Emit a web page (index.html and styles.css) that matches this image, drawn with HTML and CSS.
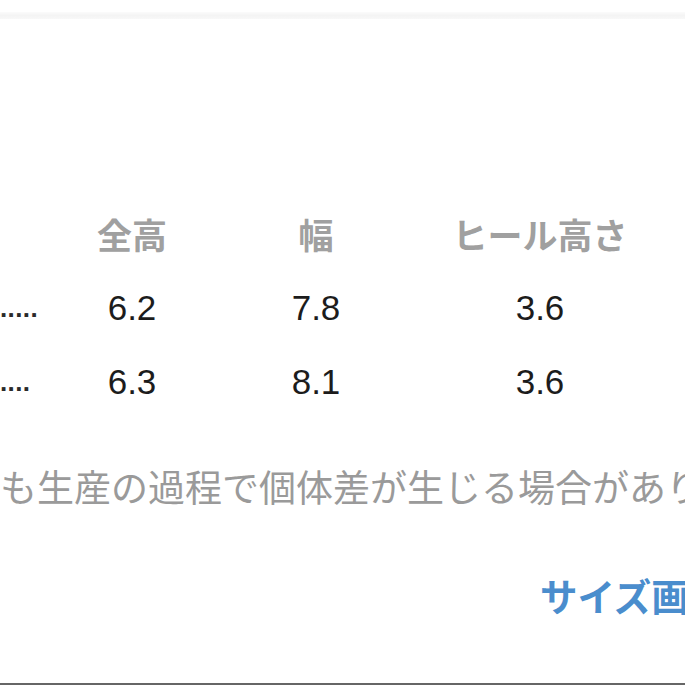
FILE: index.html
```html
<!DOCTYPE html>
<html lang="ja">
<head>
<meta charset="utf-8">
<title>サイズ表</title>
<link rel="stylesheet" href="styles.css">
</head>
<body>
<div class="page">
  <div class="topband"></div>
  <div class="size-table">
    <div class="cell label"></div>
    <div class="cell head">全高</div>
    <div class="cell head">幅</div>
    <div class="cell head">ヒール高さ</div>

    <div class="cell label">.....</div>
    <div class="cell num">6.2</div>
    <div class="cell num">7.8</div>
    <div class="cell num">3.6</div>

    <div class="cell label">....</div>
    <div class="cell num">6.3</div>
    <div class="cell num">8.1</div>
    <div class="cell num">3.6</div>
  </div>
  <p class="note">も生産の過程で個体差が生じる場合があり</p>
  <p class="link-row"><a class="link" href="#">サイズ画</a></p>
</div>
</body>
</html>
```
FILE: styles.css
```css
html, body {
  margin: 0;
  padding: 0;
  background: #ffffff;
}

.page {
  width: 685px;
  height: 685px;
  box-sizing: border-box;
  border-bottom: 2px solid #666666;
  overflow: hidden;
  font-family: "Noto Sans CJK JP", "Noto Sans", sans-serif;
}

.topband {
  margin-top: 12px;
  height: 7px;
  background: linear-gradient(#fbfbfb, #f4f4f4 50%, #f8f8f8);
}

.size-table {
  display: grid;
  grid-template-columns: 60px 144px 224px 224px;
  grid-auto-rows: 74px;
  margin-top: 178px;
}

.cell {
  display: flex;
  align-items: center;
  justify-content: center;
  white-space: nowrap;
}

.head {
  font-size: 35px;
  font-weight: 700;
  color: #a0a0a0;
  padding-bottom: 2px;
}

.num {
  font-family: "Liberation Sans", Arial, sans-serif;
  font-size: 35px;
  color: #1c1c1c;
}

.label {
  justify-content: flex-start;
  font-family: "Liberation Sans", Arial, sans-serif;
  font-size: 26px;
  font-weight: 700;
  color: #2a2a2a;
  letter-spacing: 0.4px;
}

.note {
  margin: 47px 0 0 0;
  height: 40px;
  line-height: 40px;
  font-size: 37px;
  color: #9a9a9a;
  white-space: nowrap;
  overflow: hidden;
}

.link-row {
  margin: 69px 0 0 0;
  height: 40px;
  line-height: 40px;
  padding-left: 540px;
  white-space: nowrap;
  overflow: hidden;
}

.link {
  font-size: 37.5px;
  font-weight: 700;
  color: #4a8dcd;
  text-decoration: none;
}
```
